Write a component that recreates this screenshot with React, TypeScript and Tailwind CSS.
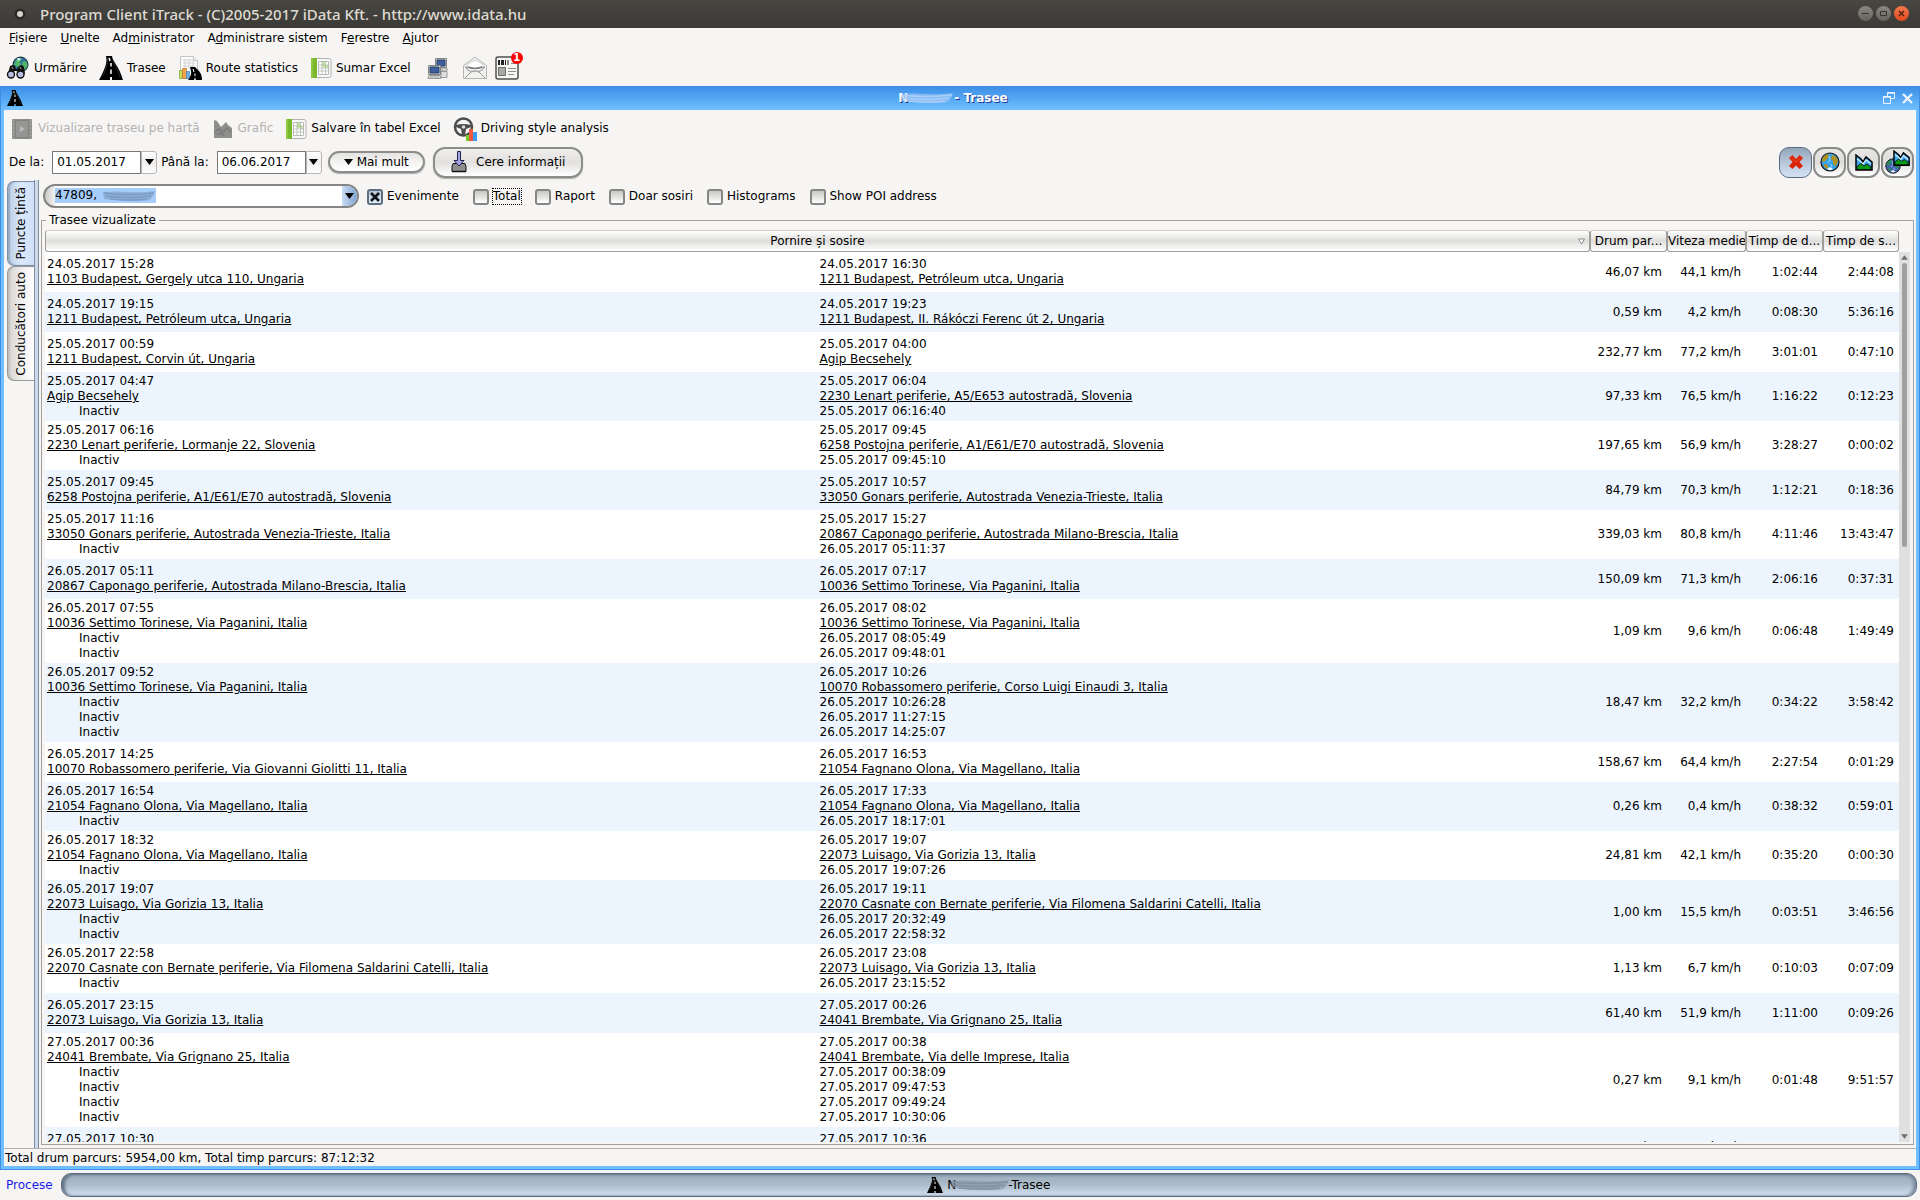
/**
 * iTrack client: route list window (Trasee)
 */
import { useState } from "react";
import type { ReactNode } from "react";

interface Trip {
  start:  [string, string];
  end:    [string, string];
  idle?:  string[];
  km:     string;
  speed:  string;
  drive:  string;
  stop:   string;
}

const TRIPS: Trip[] = [
  { start: ["24.05.2017 15:28", "1103 Budapest, Gergely utca 110, Ungaria"], end: ["24.05.2017 16:30", "1211 Budapest, Petróleum utca, Ungaria"], km: "46,07", speed: "44,1", drive: "1:02:44", stop: "2:44:08" },
  { start: ["24.05.2017 19:15", "1211 Budapest, Petróleum utca, Ungaria"], end: ["24.05.2017 19:23", "1211 Budapest, II. Rákóczi Ferenc út 2, Ungaria"], km: "0,59", speed: "4,2", drive: "0:08:30", stop: "5:36:16" },
  { start: ["25.05.2017 00:59", "1211 Budapest, Corvin út, Ungaria"], end: ["25.05.2017 04:00", "Agip Becsehely"], km: "232,77", speed: "77,2", drive: "3:01:01", stop: "0:47:10" },
  { start: ["25.05.2017 04:47", "Agip Becsehely"], end: ["25.05.2017 06:04", "2230 Lenart periferie, A5/E653 autostradă, Slovenia"], idle: ["25.05.2017 06:16:40"], km: "97,33", speed: "76,5", drive: "1:16:22", stop: "0:12:23" },
  { start: ["25.05.2017 06:16", "2230 Lenart periferie, Lormanje 22, Slovenia"], end: ["25.05.2017 09:45", "6258 Postojna periferie, A1/E61/E70 autostradă, Slovenia"], idle: ["25.05.2017 09:45:10"], km: "197,65", speed: "56,9", drive: "3:28:27", stop: "0:00:02" },
  { start: ["25.05.2017 09:45", "6258 Postojna periferie, A1/E61/E70 autostradă, Slovenia"], end: ["25.05.2017 10:57", "33050 Gonars periferie, Autostrada Venezia-Trieste, Italia"], km: "84,79", speed: "70,3", drive: "1:12:21", stop: "0:18:36" },
  { start: ["25.05.2017 11:16", "33050 Gonars periferie, Autostrada Venezia-Trieste, Italia"], end: ["25.05.2017 15:27", "20867 Caponago periferie, Autostrada Milano-Brescia, Italia"], idle: ["26.05.2017 05:11:37"], km: "339,03", speed: "80,8", drive: "4:11:46", stop: "13:43:47" },
  { start: ["26.05.2017 05:11", "20867 Caponago periferie, Autostrada Milano-Brescia, Italia"], end: ["26.05.2017 07:17", "10036 Settimo Torinese, Via Paganini, Italia"], km: "150,09", speed: "71,3", drive: "2:06:16", stop: "0:37:31" },
  { start: ["26.05.2017 07:55", "10036 Settimo Torinese, Via Paganini, Italia"], end: ["26.05.2017 08:02", "10036 Settimo Torinese, Via Paganini, Italia"], idle: ["26.05.2017 08:05:49", "26.05.2017 09:48:01"], km: "1,09", speed: "9,6", drive: "0:06:48", stop: "1:49:49" },
  { start: ["26.05.2017 09:52", "10036 Settimo Torinese, Via Paganini, Italia"], end: ["26.05.2017 10:26", "10070 Robassomero periferie, Corso Luigi Einaudi 3, Italia"], idle: ["26.05.2017 10:26:28", "26.05.2017 11:27:15", "26.05.2017 14:25:07"], km: "18,47", speed: "32,2", drive: "0:34:22", stop: "3:58:42" },
  { start: ["26.05.2017 14:25", "10070 Robassomero periferie, Via Giovanni Giolitti 11, Italia"], end: ["26.05.2017 16:53", "21054 Fagnano Olona, Via Magellano, Italia"], km: "158,67", speed: "64,4", drive: "2:27:54", stop: "0:01:29" },
  { start: ["26.05.2017 16:54", "21054 Fagnano Olona, Via Magellano, Italia"], end: ["26.05.2017 17:33", "21054 Fagnano Olona, Via Magellano, Italia"], idle: ["26.05.2017 18:17:01"], km: "0,26", speed: "0,4", drive: "0:38:32", stop: "0:59:01" },
  { start: ["26.05.2017 18:32", "21054 Fagnano Olona, Via Magellano, Italia"], end: ["26.05.2017 19:07", "22073 Luisago, Via Gorizia 13, Italia"], idle: ["26.05.2017 19:07:26"], km: "24,81", speed: "42,1", drive: "0:35:20", stop: "0:00:30" },
  { start: ["26.05.2017 19:07", "22073 Luisago, Via Gorizia 13, Italia"], end: ["26.05.2017 19:11", "22070 Casnate con Bernate periferie, Via Filomena Saldarini Catelli, Italia"], idle: ["26.05.2017 20:32:49", "26.05.2017 22:58:32"], km: "1,00", speed: "15,5", drive: "0:03:51", stop: "3:46:56" },
  { start: ["26.05.2017 22:58", "22070 Casnate con Bernate periferie, Via Filomena Saldarini Catelli, Italia"], end: ["26.05.2017 23:08", "22073 Luisago, Via Gorizia 13, Italia"], idle: ["26.05.2017 23:15:52"], km: "1,13", speed: "6,7", drive: "0:10:03", stop: "0:07:09" },
  { start: ["26.05.2017 23:15", "22073 Luisago, Via Gorizia 13, Italia"], end: ["27.05.2017 00:26", "24041 Brembate, Via Grignano 25, Italia"], km: "61,40", speed: "51,9", drive: "1:11:00", stop: "0:09:26" },
  { start: ["27.05.2017 00:36", "24041 Brembate, Via Grignano 25, Italia"], end: ["27.05.2017 00:38", "24041 Brembate, Via delle Imprese, Italia"], idle: ["27.05.2017 00:38:09", "27.05.2017 09:47:53", "27.05.2017 09:49:24", "27.05.2017 10:30:06"], km: "0,27", speed: "9,1", drive: "0:01:48", stop: "9:51:57" },
  { start: ["27.05.2017 10:30", ""], end: ["27.05.2017 10:36", ""], km: "1,52", speed: "15,2", drive: "0:06:02", stop: "0:12:10" },
];

const FILTERS = ["Evenimente", "Total", "Raport", "Doar sosiri", "Histograms", "Show POI address"];

export default function App() {
  const [checked, setChecked] = useState<string[]>(["Evenimente"]);

  const toggle = (name: string) =>
    setChecked((prev) => (prev.includes(name) ? prev.filter((n) => n !== name) : [...prev, name]));

  return (
    <div className="h-screen flex flex-col overflow-hidden bg-[#f6f5f4] text-black text-[12px] leading-[15px] font-['DejaVu_Sans',sans-serif] whitespace-nowrap">
      <TitleBar />

      {/* Menu */}
      <nav className="flex items-center gap-[13px] h-5 px-[9px] shrink-0">
        <MenuItem pre="" hot="F" post="ișiere" />
        <MenuItem pre="" hot="U" post="nelte" />
        <MenuItem pre="Ad" hot="m" post="inistrator" />
        <MenuItem pre="A" hot="d" post="ministrare sistem" />
        <MenuItem pre="F" hot="e" post="restre" />
        <MenuItem pre="" hot="A" post="jutor" />
      </nav>

      {/* Main toolbar */}
      <div className="flex items-center h-[38px] px-[6px] pt-[2px] gap-3 shrink-0">
        <ToolButton icon={<TrackIcon />} label="Urmărire" />
        <ToolButton icon={<RoadIcon className="size-6" />} label="Trasee" />
        <ToolButton icon={<StatsIcon />} label="Route statistics" />
        <ToolButton icon={<SheetIcon />} label="Sumar Excel" />
        <div className="flex items-center gap-2 pl-1">
          <button aria-label="Computers" className="w-7"><ComputersIcon /></button>
          <button aria-label="Mail"><MailIcon /></button>
          <button aria-label="News" className="relative">
            <NewsIcon />
            <span className="absolute -top-1 -right-1 size-3 rounded-full bg-[#f00] text-white text-[10px] leading-3 font-bold text-center">1</span>
          </button>
        </div>
      </div>

      {/* Child window */}
      <section className="flex-1 min-h-0 flex flex-col bg-[#6fbfff] border-x border-b border-[#3c8ee6]">
        <header className="flex items-center h-6 shrink-0 pl-[6px] pr-[6px] bg-linear-to-b from-[#3b8de6] to-[#6fbfff]">
          <RoadIcon className="size-4" />
          <h1 className="flex-1 flex justify-center items-center font-bold text-white [text-shadow:1px_1px_0_#1a3a8c]">
            N<Smudge className="w-[54px] h-3 -ml-[8px]" color="#a8cdf8" />- Trasee
          </h1>
          <div className="flex items-center gap-[7px]">
            <button aria-label="Restore">
              <svg width="12" height="12" viewBox="0 0 12 12" fill="none" stroke="#eaf3ff">
                <path d="M4.5 4V.5h7v6H8" /><path d="M4 1h8" strokeWidth="1.5" />
                <path d="M.5 4.5h7v7h-7z" /><path d="M0 5h8" strokeWidth="1.5" />
              </svg>
            </button>
            <button aria-label="Close">
              <svg width="11" height="11" viewBox="0 0 11 11" stroke="#eaf3ff" strokeWidth="2.4"><path d="M1 1l9 9M10 1l-9 9" /></svg>
            </button>
          </div>
        </header>

        <div className="flex-1 min-h-0 flex flex-col mx-[3px] mb-[3px] bg-[#f6f5f4]">
          {/* Window toolbar */}
          <div className="flex items-center h-9 shrink-0 px-2 pt-px gap-3">
            <ToolButton icon={<FilmIcon />} label="Vizualizare traseu pe hartă" disabled />
            <ToolButton icon={<GrayChartIcon />} label="Grafic" disabled />
            <ToolButton icon={<SheetIcon />} label="Salvare în tabel Excel" />
            <ToolButton icon={<WheelIcon />} label="Driving style analysis" />
          </div>

          {/* Interval */}
          <div className="flex items-center h-8 shrink-0 pl-[5px] pr-[2px]">
            <DateField label="De la:" value="01.05.2017" />
            <DateField label="Până la:" value="06.06.2017" />
            <div className="flex items-center gap-2 pl-[2px]">
              <button className="w-[97px] h-[22px] flex items-center justify-center gap-1 rounded-full border-2 border-[#8c8c8a] bg-linear-to-b from-[#e4e3e1] via-[#f4f3f2] to-white shadow-[0_1px_1px_#aaa]">
                <Triangle className="w-[9px] h-[6px]" />Mai mult
              </button>
              <button className="w-[150px] h-[31px] flex items-center justify-center gap-2 rounded-[12px] border-2 border-[#8c8c8a] bg-linear-to-b from-[#efeeec] via-[#e2e1df] to-white shadow-[0_1px_1px_#aaa]">
                <DownloadIcon />Cere informații
              </button>
            </div>
            <div className="ml-auto flex items-center gap-[1px]">
              <RoundButton name="None" pressed>
                <svg width="14" height="14" viewBox="0 0 14 14"><path d="M3.500 0L7 4l3.500-4L14 3l-3.500 4 3.500 4-3.500 3L7 10.500 3.500 14 0 11l3.500-4L0 3z" fill="#dc2408" /><path d="M2.500 3L7 7l4.500-4" fill="none" stroke="#ee4a28" /></svg>
              </RoundButton>
              <RoundButton name="Map">
                <svg width="20" height="20" viewBox="0 0 20 20"><Globe /></svg>
              </RoundButton>
              <RoundButton name="Chart">
                <svg width="18" height="17" viewBox="0 0 18 17"><MiniChart /></svg>
              </RoundButton>
              <RoundButton name="Map and chart">
                <svg width="25" height="24" viewBox="0 0 25 24">
                  <g transform="translate(0 8) scale(.8)"><Globe sea="#4a60b8" land="#2a8a5a" /></g>
                  <g transform="translate(8 0) scale(.95)"><MiniChart /></g>
                </svg>
              </RoundButton>
            </div>
          </div>

          <div className="flex-1 min-h-0 flex">
            {/* Side tabs */}
            <div className="flex flex-col shrink-0 w-[30px] pl-[3px] pt-[3px]">
              <button className="h-[85px] rounded-l-[7px] border border-r-0 border-[#7d90a8] bg-linear-to-r from-[#b9cde4] via-[#dce9fb] to-[#cfe0f8] shadow-[inset_2px_0_1px_#98abc2] flex items-center justify-center">
                <span className="[writing-mode:vertical-rl] rotate-180">Puncte țintă</span>
              </button>
              <button className="h-[115px] rounded-l-[7px] border border-r-0 border-[#9a9a98] bg-linear-to-r from-[#d4d3d1] via-[#efeeed] to-white shadow-[inset_2px_0_1px_#c0bfbd] flex items-center justify-center">
                <span className="[writing-mode:vertical-rl] rotate-180">Conducători auto</span>
              </button>
            </div>
            <div className="w-[5px] shrink-0 mt-[2px] border-x border-[#7f8da0] bg-[#ccdaea]" />

            <div className="flex-1 min-w-0 flex flex-col pl-[2px] pr-[2px] pb-[3px]">
              {/* Target and filters */}
              <div className="flex items-center h-[35px] shrink-0 pl-[2px]">
                <div className="flex items-center w-[316px] h-6 rounded-full border-2 border-[#858583] bg-linear-to-r from-[#c9c8c6] from-0% to-white to-4% overflow-hidden">
                  <div className="relative ml-[10px] flex items-center">
                    <input aria-label="Vehicle" defaultValue="47809," className="w-[101px] h-[15px] bg-[#a6cdfc] outline-none" />
                    <Smudge className="absolute left-[47px] w-[54px] h-3" color="#7d9cc4" />
                  </div>
                  <button aria-label="Open list" className="ml-auto w-[15px] h-full flex items-center justify-center bg-linear-to-r from-[#c9dcf3] to-[#7fa5d3]">
                    <Triangle className="w-[9px] h-[6px]" />
                  </button>
                </div>
                <div className="flex items-center gap-[14px] ml-2 pt-[2px]">
                  {FILTERS.map((name) => (
                    <label key={name} className="flex items-center gap-1">
                      <input
                        type="checkbox"
                        checked={checked.includes(name)}
                        onChange={() => toggle(name)}
                        className="peer appearance-none size-4 rounded-[3px] border-2 border-[#868684] bg-linear-to-b from-[#c9c8c6] to-white checked:border-[#5f6f82] checked:from-[#b6c6d8] checked:to-[#e4eefa]"
                      />
                      <svg viewBox="0 0 16 16" className="hidden peer-checked:block size-4 -ml-5 pointer-events-none" stroke="#10151c" strokeWidth="2.600"><path d="M4 4l8 8M12 4l-8 8" /></svg>
                      <span className={name === "Total" ? "outline outline-1 outline-dotted outline-black" : ""}>{name}</span>
                    </label>
                  ))}
                </div>
              </div>

              {/* Route list */}
              <fieldset className="flex-1 min-h-0 min-w-0 flex flex-col border border-[#a3a19f] px-[3px] pb-[2px]">
                <legend className="ml-[1px] px-[3px]">Trasee vizualizate</legend>
                <div className="flex-1 min-h-0 flex mt-[2px]">
                  <div className="flex-1 min-w-0 overflow-hidden bg-white">
                    <TripTable />
                  </div>
                  <div className="flex flex-col items-center w-[11px] mt-[22px] shrink-0 bg-[#e0e0e0]">
                    <Triangle className="w-[7px] h-[5px] mt-[3px] rotate-180 text-[#6e6e6e]" />
                    <div className="w-[5px] h-[284px] mt-[3px] rounded-full bg-[#a0a0a0]" />
                    <Triangle className="w-[7px] h-[5px] mt-auto mb-[3px] text-[#6e6e6e]" />
                  </div>
                </div>
              </fieldset>
            </div>
          </div>

          {/* Status */}
          <footer className="h-[18px] shrink-0 border-t border-[#b3b1af] px-[1px] pt-[2px]">
            Total drum parcurs: 5954,00 km, Total timp parcurs: 87:12:32
          </footer>
        </div>
      </section>

      {/* Process bar */}
      <div className="flex items-center h-[30px] shrink-0 pl-[6px] pr-[3px] gap-2">
        <a href="#procese" className="text-[#1a1aee]">Procese</a>
        <button className="flex-1 h-6 flex items-center justify-center gap-1 rounded-[10px] border border-[#5c6b7c] bg-linear-to-b from-[#9dadbd] via-[#adbccb] to-[#d3e1f1] shadow-[inset_3px_1px_3px_#66778a,inset_-3px_0_3px_#7d8ea1]">
          <RoadIcon className="size-4" />
          <span className="flex items-center">N<Smudge className="w-[60px] h-3 -ml-[6px] -mr-[2px]" color="#8391a3" />-Trasee</span>
        </button>
      </div>
    </div>
  );
}

function TitleBar() {
  return (
    <header className="flex items-center h-7 shrink-0 px-[11px] pb-px bg-linear-to-b from-[#474641] to-[#3b3a36]">
      <svg width="18" height="18" viewBox="0 0 18 18"><circle cx="9" cy="9" r="5.500" fill="#2b2a28" /><circle cx="9" cy="9" r="3" fill="#d8d4cc" /></svg>
      <span className="ml-[11px] text-[#dfdbd2] text-[15px] leading-5 font-medium font-['Noto_Sans',sans-serif]">
        Program Client iTrack - (C)2005-2017 iData Kft. - http://www.idata.hu
      </span>
      <div className="ml-auto flex gap-[3px]">
        <button aria-label="Minimize" className="size-[15px] rounded-full bg-linear-to-b from-[#8a8880] to-[#65635c] flex items-center justify-center">
          <svg width="7" height="7" viewBox="0 0 7 7" stroke="#35342f"><path d="M0 3.500h7" /></svg>
        </button>
        <button aria-label="Maximize" className="size-[15px] rounded-full bg-linear-to-b from-[#8a8880] to-[#65635c] flex items-center justify-center">
          <svg width="7" height="7" viewBox="0 0 7 7" stroke="#35342f" fill="none"><path d="M.5 1.500h6v4h-6z" /></svg>
        </button>
        <button aria-label="Quit" className="size-[15px] rounded-full bg-linear-to-b from-[#f5784f] to-[#e0491a] flex items-center justify-center">
          <svg width="7" height="7" viewBox="0 0 7 7" stroke="#4a2010" strokeWidth="1.300"><path d="M1 1l5 5M6 1L1 6" /></svg>
        </button>
      </div>
    </header>
  );
}

function MenuItem({ pre, hot, post }: { pre: string; hot: string; post: string }) {
  return <button>{pre}<span className="underline underline-offset-1">{hot}</span>{post}</button>;
}

function ToolButton({ icon, label, disabled }: { icon: ReactNode; label: string; disabled?: boolean }) {
  return (
    <button disabled={disabled} className="flex items-center gap-1 disabled:text-[#b4b2b0]">
      {icon}
      {label}
    </button>
  );
}

function DateField({ label, value }: { label: string; value: string }) {
  return (
    <div className="flex items-center mr-1">
      <label className="flex items-center gap-2">
        {label}
        <input defaultValue={value} className="w-[89px] h-[23px] px-1 bg-white border border-[#7b7977] outline-none" />
      </label>
      <button aria-label="Open calendar" className="w-4 h-[23px] flex items-center justify-center rounded-r-[3px] border border-[#b8b6b4] bg-linear-to-b from-white via-[#eeedeb] to-white">
        <Triangle className="w-[9px] h-[6px]" />
      </button>
    </div>
  );
}

function RoundButton({ name, pressed, children }: { name: string; pressed?: boolean; children: ReactNode }) {
  return (
    <button
      aria-label={name}
      className={
        pressed
          ? "w-[33px] h-[31px] flex items-center justify-center rounded-[10px] border border-[#5a6a7d] bg-linear-to-b from-[#93a5b9] via-[#b9c8d9] to-[#d3e2f4]"
          : "w-[33px] h-[31px] flex items-center justify-center rounded-[11px] border-2 border-[#8a8a88] bg-linear-to-b from-[#e9e8e6] via-[#dddcda] to-white"
      }
    >
      {children}
    </button>
  );
}

function TripTable() {
  const th = "h-[22px] p-0 font-normal text-center overflow-hidden rounded-[3px] border border-[#a09e9c] border-t-[#cfcdcb] bg-linear-to-b from-white via-[#dfdedc] to-white";
  return (
    <table className="w-full table-fixed border-separate border-spacing-0">
      <colgroup>
        <col />
        <col />
        <col className="w-[77px]" />
        <col className="w-[79px]" />
        <col className="w-[77px]" />
        <col className="w-[76px]" />
      </colgroup>
      <thead>
        <tr>
          <th colSpan={2} className={th}>
            <div className="flex items-center px-1">
              <span className="flex-1 pl-[7px]">Pornire și sosire</span>
              <svg width="7" height="7" viewBox="0 0 7 7" fill="#fff" stroke="#8a8886"><path d="M.5 1h6l-3 5z" /></svg>
            </div>
          </th>
          <th className={th}>Drum par...</th>
          <th className={th}>Viteza medie</th>
          <th className={th}>Timp de d...</th>
          <th className={th}>Timp de s...</th>
        </tr>
      </thead>
      <tbody>
        {TRIPS.map((t, i) => {
          const pad = t.idle ? "py-[2px] pl-[2px]" : "py-[5px] pl-[2px]";
          return (
            <tr key={i} className="even:bg-[#ecf5fe]">
              <td className={pad}>
                <Stop stop={t.start} />
                {t.idle?.map((x) => <div key={x} className="pl-8">Inactiv</div>)}
              </td>
              <td className={pad}>
                <Stop stop={t.end} />
                {t.idle?.map((x) => <div key={x}>{x}</div>)}
              </td>
              <td className="text-right pr-[5px]">{t.km} km</td>
              <td className="text-right pr-[5px]">{t.speed} km/h</td>
              <td className="text-right pr-[5px]">{t.drive}</td>
              <td className="text-right pr-[5px]">{t.stop}</td>
            </tr>
          );
        })}
      </tbody>
    </table>
  );
}

function Stop({ stop }: { stop: [string, string] }) {
  return (
    <>
      <div>{stop[0]}</div>
      <div className="min-h-[15px]">
        {stop[1] && <a href="#map" className="underline underline-offset-1">{stop[1]}</a>}
      </div>
    </>
  );
}

/* ---- Icons ---- */

function Triangle({ className }: { className: string }) {
  return <svg viewBox="0 0 9 6" className={className} fill="currentColor"><path d="M0 0h9L4.500 6z" /></svg>;
}

// blurred-out plate number
function Smudge({ className, color }: { className: string; color: string }) {
  return (
    <svg viewBox="0 0 54 12" preserveAspectRatio="none" className={className}>
      <path d="M1 2q12-1 25 0t27-1q-1 5-5 9-10 2-22 1-13-1-24-2z" fill={color} opacity=".6" />
      <path d="M2 3q20 3 50 0M4 6q20 3 45 0M8 9q18 2 37 0" stroke={color} fill="none" strokeWidth="1.500" />
    </svg>
  );
}

function RoadIcon({ className }: { className: string }) {
  return (
    <svg viewBox="0 0 24 24" className={className}>
      <path d="M7 0h6q0 3 3 7 5 7 8 17H13v-3h-2v3H0Q5 15 7 8 8 4 7 0z" fill="#000" />
      <path d="M10 2l1 3M12 7v3.500M12 13.500V18" stroke="#fff" strokeWidth="1.500" />
      <path d="M9 1Q9 8 4 20M14 5q5 8 7 16" stroke="#444" fill="none" strokeWidth=".6" />
    </svg>
  );
}

function TrackIcon() {
  return (
    <svg width="24" height="24" viewBox="0 0 24 24">
      <circle cx="14.500" cy="8.500" r="7.500" fill="#2f6f9f" stroke="#0c2a2a" />
      <path d="M10 4q4-3 6-1l-2 3 1 3-3 2-4-2zM17 5l4 1 .5 4-3 4-3-4z" fill="#4fb56a" />
      <path d="M11 2q3 0 4 1l-3 2z" fill="#e8f8ff" />
      <path d="M4 10l3-1 2 1 1 3h1l2-3 3-1 2 2 1 7h-3l-3-3h-4l-4 3H2z" fill="#111" />
      <circle cx="5" cy="18.500" r="3.500" fill="#b9bde4" stroke="#111" strokeWidth="1.400" />
      <circle cx="14.500" cy="18.500" r="3.500" fill="#b9bde4" stroke="#111" strokeWidth="1.400" />
      <path d="M6 11l1 2M14 11l1 2" stroke="#aaa" />
    </svg>
  );
}

function StatsIcon() {
  return (
    <svg width="24" height="24" viewBox="0 0 24 24">
      <path d="M2.500.5h13l4 4v18h-17z" fill="#fbfbfb" stroke="#c4c4c4" />
      <path d="M5 4h10M5 7h12M5 10h12M7 3v10M11 3v10M15 5v8" stroke="#d2d2d2" />
      <path d="M15.500.5v4h4" fill="#eee" stroke="#c4c4c4" />
      <path d="M1.500 14.500h3v8h-3z" fill="#bfe05a" stroke="#7fa32c" strokeWidth=".7" />
      <path d="M4.500 12.500h4v10h-4z" fill="#f2a24a" stroke="#c8752a" strokeWidth=".7" />
      <path d="M8.500 15.500h3v7h-3z" fill="#6fb4e8" stroke="#3f7fb8" strokeWidth=".7" />
      <path d="M12 11h5l2 2q5 4 5 11h-6l-1-3-1 3h-6q4-5 3-9z" fill="#000" />
      <path d="M15 13l1 3M17 17.500v2.500" stroke="#fff" />
    </svg>
  );
}

function SheetIcon() {
  return (
    <svg width="22" height="22" viewBox="0 0 22 22">
      <path d="M2 1.500h17q2 0 2 2v15q0 2-2 2H2z" fill="#f7f7f7" stroke="#b2b2b2" />
      <path d="M1 1h6v20H1z" fill="#78b82c" /><path d="M2 1v20" stroke="#a3d85a" />
      <path d="M8.500 4.500h10v13h-10z" fill="#fff" stroke="#b8bcb4" />
      <path d="M12 5h3v5h-3zM15 8h3v3h-3z" fill="#bfe69a" />
      <path d="M8.500 8h10M8.500 11h10M8.500 14h10M12 4.500v13M15.500 4.500v13" stroke="#b4bab0" strokeWidth=".8" />
    </svg>
  );
}

function ComputersIcon() {
  return (
    <svg width="22" height="24" viewBox="0 0 22 24">
      <path d="M8.500 2.500h11v9h-11z" fill="#d8d8d4" stroke="#84847f" /><path d="M10 4h8v6h-8z" fill="#3f5f9c" stroke="#26406e" />
      <path d="M15 12h5v3h-5zM14 15.500h6v6h-6z" fill="#ddd" stroke="#999" />
      <path d="M1.500 9.500h12v9h-12z" fill="#d8d8d4" stroke="#84847f" /><path d="M3 11h9v6H3z" fill="#3f5f9c" stroke="#26406e" />
      <path d="M2 19.500h11l1 3H1z" fill="#ddd" stroke="#999" /><path d="M3 21h9" stroke="#aaa" />
    </svg>
  );
}

function MailIcon() {
  return (
    <svg width="24" height="24" viewBox="0 0 24 24" fill="#f1f1f0" stroke="#b4b4b2">
      <path d="M.5 9.500L12 1l11.500 8.500v13H.5z" />
      <path d="M4 8.500L12 4l8 4.500v6H4z" fill="#fff" stroke="#cfcfcd" />
      <path d="M2 11q10 3 20 0l-6 5 6 6M2 11l6 5-6 6M8 16q4-2 8 0" fill="none" stroke="#999" />
      <path d="M5 11q7 3 14 0" fill="none" stroke="#777" strokeWidth="1.400" />
    </svg>
  );
}

function NewsIcon() {
  return (
    <svg width="24" height="24" viewBox="0 0 24 24">
      <rect x="1" y="1" width="22" height="22" rx="2" fill="#f6f6f5" stroke="#50504e" strokeWidth="1.500" />
      <path d="M3 4h2v5H3zM6 4h3v5H6zM10 4h1v5h-1z" fill="#222" /><path d="M12 4h2v5h-2z" fill="#888" />
      <path d="M3.500 11.500h7v8h-7z" fill="#a9a9a7" stroke="#6a6a68" />
      <path d="M13 12.500h8M13 15.500h8M13 18.500h6M16 7.500h5" stroke="#8c8c8a" />
    </svg>
  );
}

function FilmIcon() {
  return (
    <svg width="22" height="22" viewBox="0 0 22 22">
      <rect x="0" y="1" width="20" height="20" rx="1" fill="#8d8d8c" />
      <path d="M1.500 2v18M18.500 2v18" stroke="#a9a9a8" strokeWidth="1.200" strokeDasharray="2 1.500" />
      <path d="M3.500 2.500h13v17h-13z" fill="#959594" stroke="#828281" />
      <path d="M8 8l5 3-5 3z" fill="#bababa" />
    </svg>
  );
}

function GrayChartIcon() {
  return (
    <svg width="22" height="20" viewBox="0 0 22 20">
      <path d="M2 1l3 1 4 6 5-5 2 3 4 3v10H2z" fill="#8e8e8d" />
      <path d="M3 13l4-3 4 3 4-4 4 4M5 16l3-2 4 2" stroke="#7a7a79" fill="none" strokeWidth="1.500" />
    </svg>
  );
}

function WheelIcon() {
  return (
    <svg width="24" height="24" viewBox="0 0 24 24">
      <circle cx="10.500" cy="10" r="8.500" fill="#f6f5f4" stroke="#4c4c4c" strokeWidth="2.500" />
      <path d="M3 8q7-2 15 0v2l-5 2-1 6H9l-1-6-5-2z" fill="#4c4c4c" />
      <circle cx="10.500" cy="10" r="1.800" fill="#ddd" />
      <path d="M13 18h4v6h-4z" fill="#78c828" /><path d="M16 12h4v12h-4z" fill="#f05a3c" /><path d="M20 15h4v9h-4z" fill="#3c9cf0" />
    </svg>
  );
}

function DownloadIcon() {
  return (
    <svg width="18" height="22" viewBox="0 0 18 22">
      <path d="M3 12.500h12l1 3v5H2v-5z" fill="#8e8e8e" stroke="#111" /><path d="M2 20.500h14" stroke="#111" strokeWidth="1.500" />
      <path d="M7.500.5h3v9h3.500L9 15 4 9.500h3.500z" fill="#a4a6e4" stroke="#22224c" />
    </svg>
  );
}

function Globe({ sea = "#3aa0e8", land = "#b0921c" }: { sea?: string; land?: string }) {
  return (
    <>
      <circle cx="10" cy="10" r="9" fill={sea} stroke="#111" strokeWidth="1.200" />
      <path d="M3 5q3-3 6-3l-1 4-2 2-2 2-2-1z" fill={land} />
      <path d="M12 3q5 1 6 6l-2 5-3-2v-3l-2-2z" fill={land} />
      <path d="M4 12l4 1v3l-1 1-3-3z" fill={land} />
      <path d="M9 4l1 4-2 3M11 12l1 3" stroke="#8fdcff" fill="none" />
      <path d="M7 17q3 2 6 0l-3-2z" fill="#fff" />
    </>
  );
}

function MiniChart() {
  return (
    <>
      <path d="M1 1l5 4 2 3 3-5 6 5v8H1z" fill="#3aa4f0" stroke="#000" strokeWidth="1.500" />
      <path d="M2 5l3 2 3 3 3-4 5 4" fill="none" stroke="#c8ecff" strokeWidth="1.300" />
      <path d="M2 15.500v-3l4-3 3 2.500 3-2 4 3v2.500z" fill="#0a9a14" stroke="#000" strokeWidth=".8" />
    </>
  );
}
